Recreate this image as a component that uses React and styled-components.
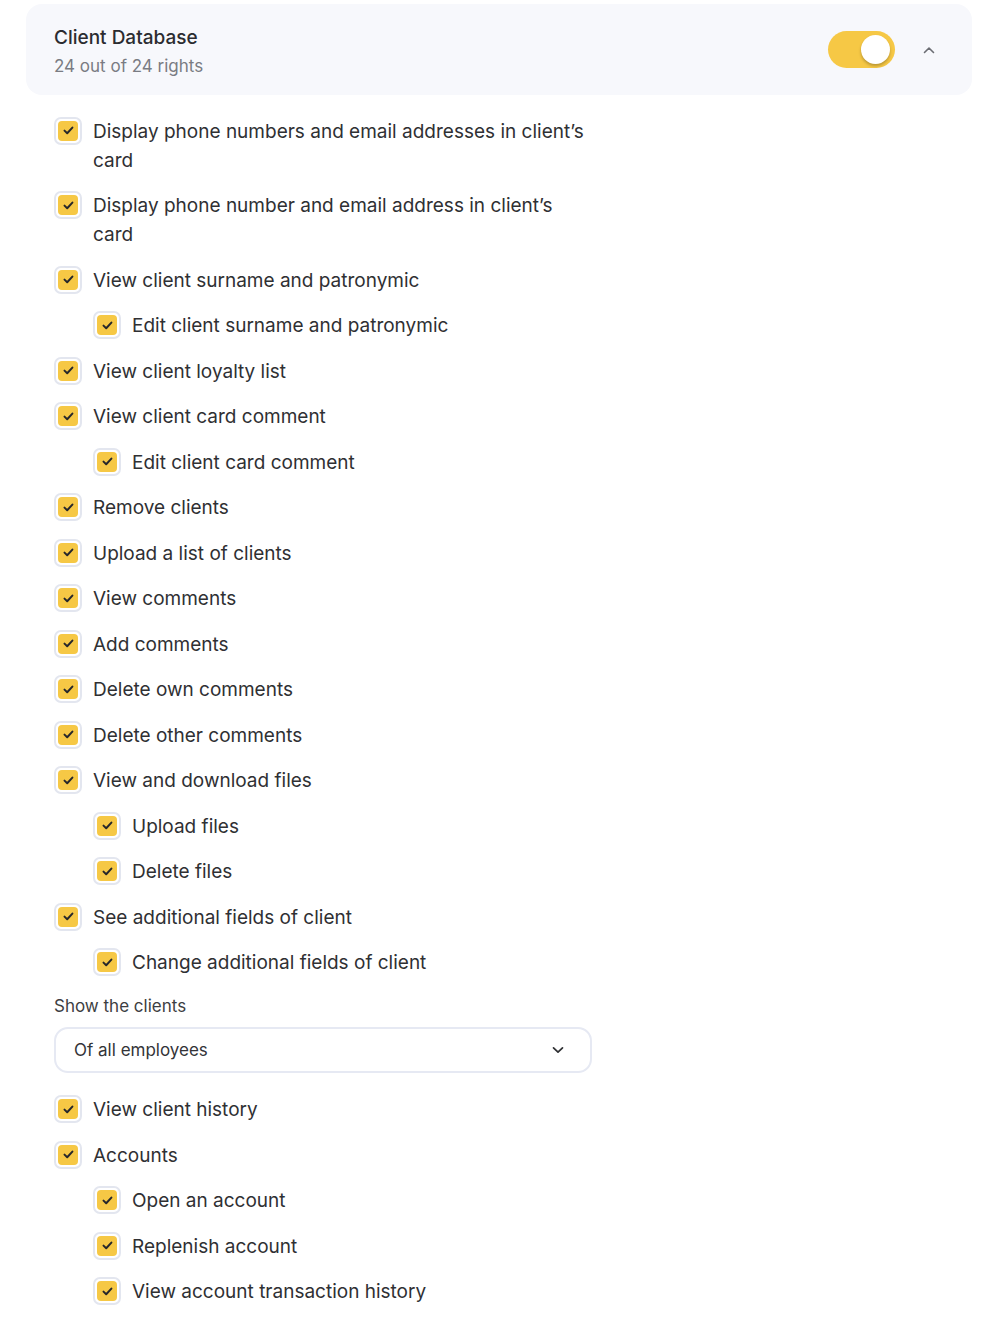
import React from 'react';
import styled, { createGlobalStyle } from 'styled-components';

const GlobalStyle = createGlobalStyle`
  body {
    margin: 0;
    background: #ffffff;
    font-family: Inter, "Noto Sans", sans-serif;
    color: #2f3033;
  }
`;

const Page = styled.div`
  padding: 4px 28px 20px 26px;
`;

const Header = styled.div`
  display: flex;
  align-items: center;
  justify-content: space-between;
  background: #f7f8fc;
  border-radius: 16px;
  height: 91px;
  padding: 0 37px 0 28px;
  box-sizing: border-box;
`;

const Titles = styled.div`
  display: flex;
  flex-direction: column;
  gap: 5px;
  margin-top: 4px;
`;

const Title = styled.div`
  font-size: 19px;
  font-weight: 500;
  line-height: 24px;
  color: #2b2c30;
`;

const Subtitle = styled.div`
  font-size: 17px;
  line-height: 22px;
  color: #7a7c83;
`;

const Controls = styled.div`
  display: flex;
  align-items: center;
  gap: 28px;
`;

const Toggle = styled.div`
  position: relative;
  width: 67px;
  height: 37px;
  border-radius: 19px;
  background: #f6c845;
`;

const Knob = styled.div`
  position: absolute;
  top: 4px;
  right: 5px;
  width: 29px;
  height: 29px;
  border-radius: 50%;
  background: #fff;
  box-shadow: 0 2px 3px rgba(0, 0, 0, 0.25);
`;

const List = styled.div`
  display: flex;
  flex-direction: column;
  gap: 16.5px;
  padding: 21.5px 0 0 28px;
  max-width: 538px;
`;

const Row = styled.label`
  display: flex;
  align-items: flex-start;
  gap: 11px;
  padding-left: ${p => (p.$sub ? '39px' : '0')};
  font-size: 19px;
  line-height: 29px;
  color: #2f3033;
`;

const Text = styled.span`
  max-width: 496px;
`;

const Box = styled.span`
  flex: none;
  width: 28px;
  height: 28px;
  box-sizing: border-box;
  border: 2px solid #e3e6ef;
  border-radius: 7px;
  padding: 2px;
  display: flex;
  background: #fff;
`;

const BoxFill = styled.span`
  flex: 1;
  border-radius: 4px;
  background: #f6c845;
  display: flex;
  align-items: center;
  justify-content: center;
`;

const Label = styled.div`
  font-size: 17px;
  line-height: 20px;
  color: #3d3e42;
  margin-top: 2px;
`;

const Select = styled.div`
  display: flex;
  align-items: center;
  justify-content: space-between;
  height: 46px;
  box-sizing: border-box;
  border: 2px solid #e6e9f3;
  border-radius: 14px;
  padding: 0 26px 0 18px;
  font-size: 17px;
  color: #333438;
  margin: -5.5px 0 6px;
`;

const Check = () => (
  <svg width="11" height="9" viewBox="0 0 11 9">
    <path d="M1.5 4.6 L4.2 7.2 L9.4 1.6" fill="none" stroke="#26272b" strokeWidth="2" strokeLinecap="round" strokeLinejoin="round" />
  </svg>
);

const Item = ({ sub, children }) => (
  <Row $sub={sub}>
    <Box><BoxFill><Check /></BoxFill></Box>
    <Text>{children}</Text>
  </Row>
);

const first = [
  ['Display phone numbers and email addresses in client\u2019s card'],
  ['Display phone number and email address in client\u2019s card'],
  ['View client surname and patronymic'],
  ['Edit client surname and patronymic', true],
  ['View client loyalty list'],
  ['View client card comment'],
  ['Edit client card comment', true],
  ['Remove clients'],
  ['Upload a list of clients'],
  ['View comments'],
  ['Add comments'],
  ['Delete own comments'],
  ['Delete other comments'],
  ['View and download files'],
  ['Upload files', true],
  ['Delete files', true],
  ['See additional fields of client'],
  ['Change additional fields of client', true],
];

const second = [
  ['View client history'],
  ['Accounts'],
  ['Open an account', true],
  ['Replenish account', true],
  ['View account transaction history', true],
];

export default function App() {
  return (
    <>
      <GlobalStyle />
      <Page>
        <Header>
          <Titles>
            <Title>Client Database</Title>
            <Subtitle>24 out of 24 rights</Subtitle>
          </Titles>
          <Controls>
            <Toggle><Knob /></Toggle>
            <svg width="12" height="8" viewBox="0 0 12 8">
              <path d="M1.5 6.5 L6 2 L10.5 6.5" fill="none" stroke="#6b6d73" strokeWidth="1.6" strokeLinecap="round" strokeLinejoin="round" />
            </svg>
          </Controls>
        </Header>
        <List>
          {first.map(([t, s]) => <Item key={t} sub={s}>{t}</Item>)}
          <Label>Show the clients</Label>
          <Select>
            <span>Of all employees</span>
            <svg width="12" height="8" viewBox="0 0 12 8">
              <path d="M1.5 1.8 L6 6.2 L10.5 1.8" fill="none" stroke="#2f3033" strokeWidth="1.7" strokeLinecap="round" strokeLinejoin="round" />
            </svg>
          </Select>
          {second.map(([t, s]) => <Item key={t} sub={s}>{t}</Item>)}
        </List>
      </Page>
    </>
  );
}
